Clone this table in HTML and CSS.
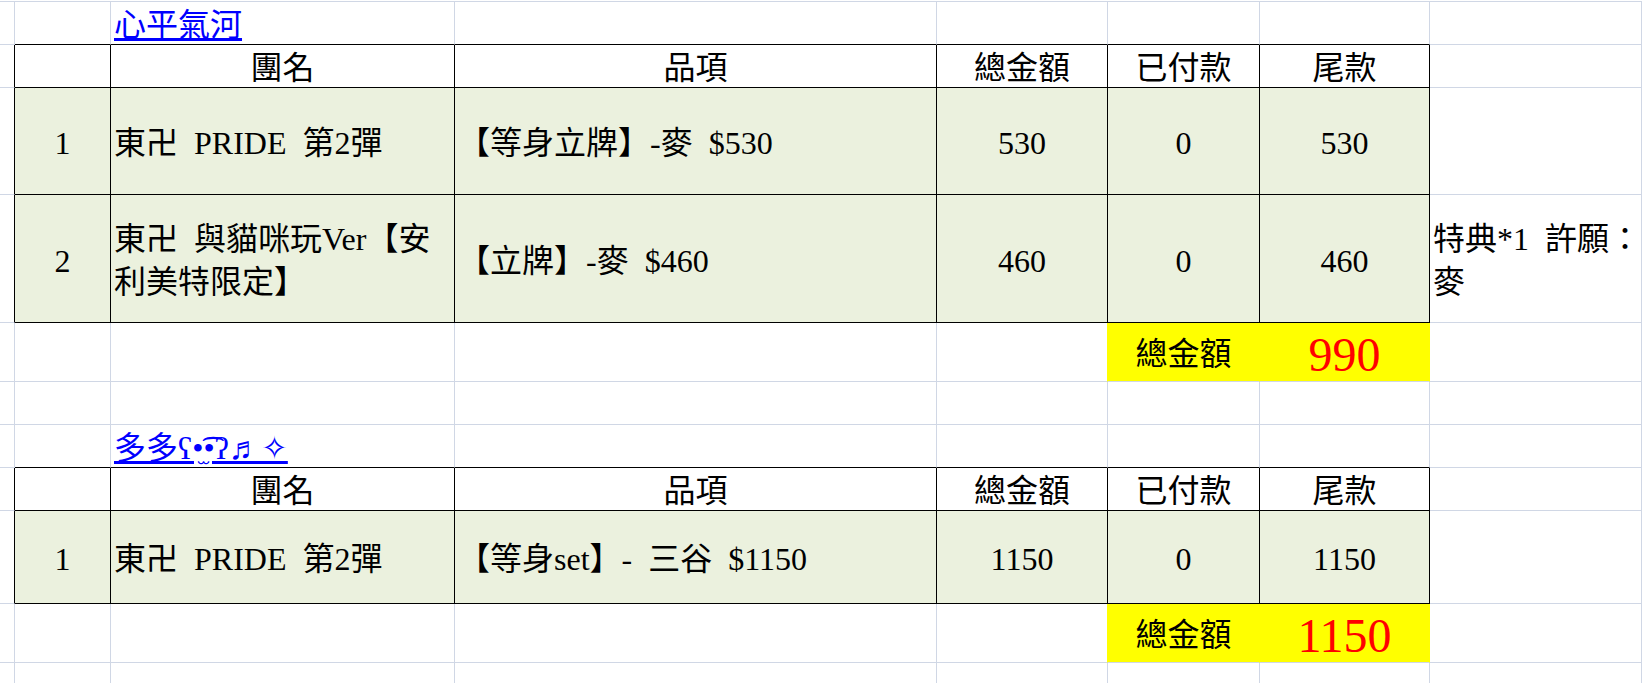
FILE: index.html
```html
<!DOCTYPE html>
<html lang="zh-Hant">
<head>
<meta charset="utf-8">
<title>訂單</title>
<link rel="stylesheet" href="styles.css">
</head>
<body>
<div class="sheet">
  <div class="row h43">
    <div class="cell"></div>
    <div class="cell cap"></div>
    <div class="cell cap l"><a class="link" href="#">心平氣河</a></div>
    <div class="cell cap"></div>
    <div class="cell cap"></div>
    <div class="cell cap"></div>
    <div class="cell cap"></div>
    <div class="cell"></div>
  </div>
  <div class="row h43">
    <div class="cell edge"></div>
    <div class="cell tb"></div>
    <div class="cell tb c">團名</div>
    <div class="cell tb c">品項</div>
    <div class="cell tb c">總金額</div>
    <div class="cell tb c">已付款</div>
    <div class="cell tb c">尾款</div>
    <div class="cell"></div>
  </div>
  <div class="row h107">
    <div class="cell edge"></div>
    <div class="cell tb fill c">1</div>
    <div class="cell tb fill l">東卍 PRIDE 第2彈</div>
    <div class="cell tb fill l">【等身立牌】-麥 $530</div>
    <div class="cell tb fill c">530</div>
    <div class="cell tb fill c">0</div>
    <div class="cell tb fill c">530</div>
    <div class="cell"></div>
  </div>
  <div class="row h128">
    <div class="cell edge"></div>
    <div class="cell tb fill c">2</div>
    <div class="cell tb fill l">東卍 與貓咪玩Ver【安<br>利美特限定】</div>
    <div class="cell tb fill l">【立牌】-麥 $460</div>
    <div class="cell tb fill c">460</div>
    <div class="cell tb fill c">0</div>
    <div class="cell tb fill c">460</div>
    <div class="cell l">特典*1 許願：<br>麥</div>
  </div>
  <div class="row h59">
    <div class="cell"></div>
    <div class="cell"></div>
    <div class="cell"></div>
    <div class="cell"></div>
    <div class="cell hl-edge"></div>
    <div class="cell hl c">總金額</div>
    <div class="cell hl c"><span class="big">990</span></div>
    <div class="cell"></div>
  </div>
  <div class="row h43">
    <div class="cell"></div>
    <div class="cell"></div>
    <div class="cell"></div>
    <div class="cell"></div>
    <div class="cell"></div>
    <div class="cell"></div>
    <div class="cell"></div>
    <div class="cell"></div>
  </div>
  <div class="row h43">
    <div class="cell"></div>
    <div class="cell cap"></div>
    <div class="cell cap l"><a class="link" href="#">多多ʕ•̫͡•ʔ♬✧</a></div>
    <div class="cell cap"></div>
    <div class="cell cap"></div>
    <div class="cell cap"></div>
    <div class="cell cap"></div>
    <div class="cell"></div>
  </div>
  <div class="row h43">
    <div class="cell edge"></div>
    <div class="cell tb"></div>
    <div class="cell tb c">團名</div>
    <div class="cell tb c">品項</div>
    <div class="cell tb c">總金額</div>
    <div class="cell tb c">已付款</div>
    <div class="cell tb c">尾款</div>
    <div class="cell"></div>
  </div>
  <div class="row h93">
    <div class="cell edge"></div>
    <div class="cell tb fill c">1</div>
    <div class="cell tb fill l">東卍 PRIDE 第2彈</div>
    <div class="cell tb fill l">【等身set】- 三谷 $1150</div>
    <div class="cell tb fill c">1150</div>
    <div class="cell tb fill c">0</div>
    <div class="cell tb fill c">1150</div>
    <div class="cell"></div>
  </div>
  <div class="row h59">
    <div class="cell"></div>
    <div class="cell"></div>
    <div class="cell"></div>
    <div class="cell"></div>
    <div class="cell hl-edge"></div>
    <div class="cell hl c">總金額</div>
    <div class="cell hl c"><span class="big">1150</span></div>
    <div class="cell"></div>
  </div>
  <div class="row h43">
    <div class="cell"></div>
    <div class="cell"></div>
    <div class="cell"></div>
    <div class="cell"></div>
    <div class="cell"></div>
    <div class="cell"></div>
    <div class="cell"></div>
    <div class="cell"></div>
  </div>
</div>
</body>
</html>
```

FILE: styles.css
```css
* {
  box-sizing: border-box;
}

html,
body {
  margin: 0;
  padding: 0;
  background: #ffffff;
}

body {
  font-family: "Liberation Serif", "Noto Sans CJK TC", serif;
  font-size: 32px;
  line-height: 43px;
  color: #000000;
  word-spacing: 0.25em;
  overflow: hidden;
}

.sheet {
  width: 1642px;
  margin-top: 1px;
  border-top: 1px solid #d0d7e5;
}

.row {
  display: grid;
  grid-template-columns: 15px 96px 344px 482px 171px 152px 170px 1fr;
  grid-template-rows: minmax(0, 1fr);
}

.h43 { height: 43px; }
.h59 { height: 59px; }
.h93 { height: 93px; }
.h107 { height: 107px; }
.h128 { height: 128px; }

.cell {
  display: flex;
  align-items: center;
  min-width: 0;
  min-height: 0;
  height: 100%;
  padding-top: 5px;
  white-space: nowrap;
  border-right: 1px solid #d0d7e5;
  border-bottom: 1px solid #d0d7e5;
}

.c {
  justify-content: center;
}

.l {
  padding-left: 3px;
}

.cap {
  border-bottom-color: #000000;
}

.edge {
  border-right-color: #000000;
}

.tb {
  border-right-color: #000000;
  border-bottom-color: #000000;
}

.fill {
  background: #ebf1de;
}

.hl {
  background: #ffff00;
  border-right-color: #ffff00;
}

.hl-edge {
  border-right-color: #ffff00;
}

.big {
  color: #ff0000;
  font-size: 48px;
}

.link {
  color: #0000ff;
  text-decoration: underline;
}
```
